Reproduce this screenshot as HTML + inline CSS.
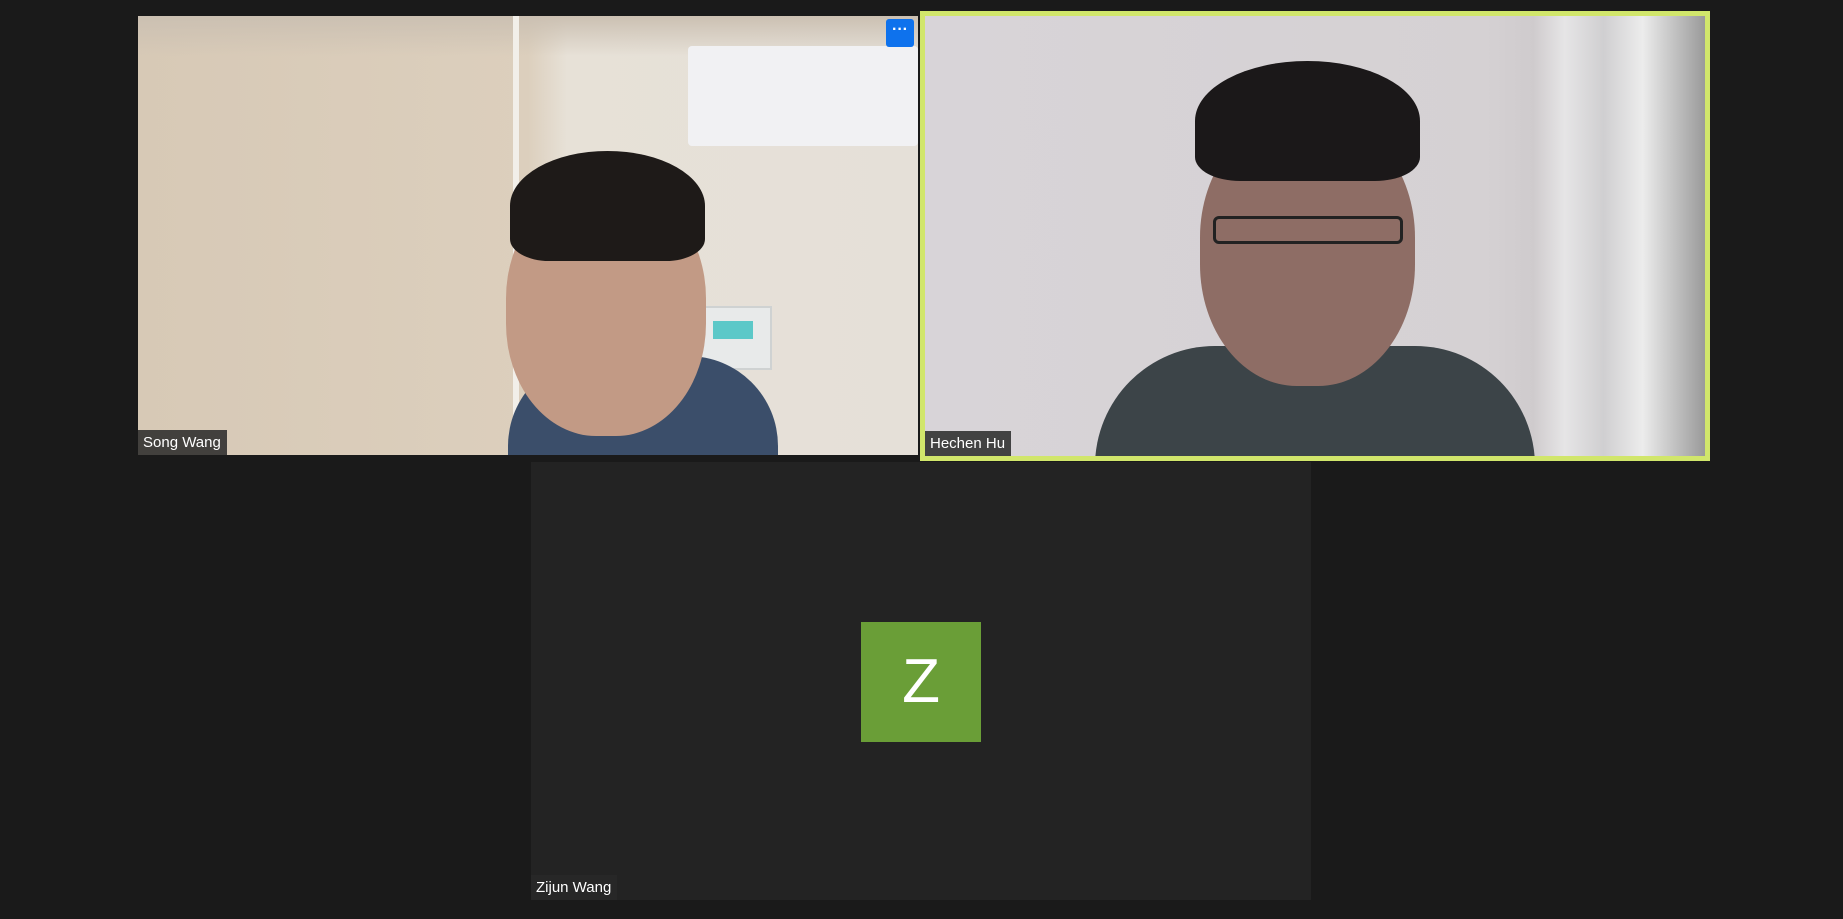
<!DOCTYPE html>
<html><head><meta charset="utf-8"><style>
html,body{margin:0;padding:0;width:1843px;height:919px;background:#1a1a1a;overflow:hidden;font-family:"Liberation Sans",sans-serif}
.t{position:absolute;overflow:hidden}
.lbl{position:absolute;left:0;bottom:0;background:rgba(40,40,40,.85);color:#fff;font-size:15px;padding:4px 6px 3px 5px;line-height:18px}
.b{position:absolute}
</style></head><body>
<div class="t" style="left:138px;top:16px;width:780px;height:439px;background:linear-gradient(90deg,#d7c9b6 0%,#dccfbd 50%,#e7e1d7 55%,#e5e0d8 100%)">
 <div class="b" style="left:0;top:0;width:780px;height:40px;background:linear-gradient(#cbc0b2,rgba(0,0,0,0))"></div>
 <div class="b" style="left:375px;top:0;width:6px;height:439px;background:#f2efe9"></div>
 <div class="b" style="left:550px;top:30px;width:230px;height:100px;background:#f1f1f3;border-radius:4px"></div>
 <div class="b" style="left:560px;top:290px;width:70px;height:60px;background:#e8eaea;border:2px solid #cfd2d2"></div>
 <div class="b" style="left:575px;top:305px;width:40px;height:18px;background:#5cc8c8"></div>
 <div class="b" style="left:370px;top:340px;width:270px;height:120px;background:#3b4e6a;border-radius:90px 90px 0 0"></div>
 <div class="b" style="left:368px;top:170px;width:200px;height:250px;background:#c29a85;border-radius:45%"></div>
 <div class="b" style="left:372px;top:135px;width:195px;height:110px;background:#1e1a18;border-radius:50% 50% 20% 20%"></div>
 <div class="lbl">Song Wang</div>
 <div class="b" style="left:748px;top:3px;width:28px;height:28px;background:#0e72ed;border-radius:3px;color:#fff;font-size:16px;text-align:center;line-height:22px;font-weight:bold">···</div>
</div>
<div class="t" style="left:920px;top:11px;width:780px;height:440px;border:5px solid #d1e66b;background:linear-gradient(90deg,#d8d4d8 0%,#d5d1d3 72%,#cfcbcd 78%,#e6e5e6 82%,#d0cfd1 87%,#ececec 92%,#9a9a9a 100%)">
 <div class="b" style="left:170px;top:330px;width:440px;height:120px;background:#3c4448;border-radius:120px 120px 0 0"></div>
 <div class="b" style="left:275px;top:100px;width:215px;height:270px;background:#8e6d65;border-radius:45%"></div>
 <div class="b" style="left:270px;top:45px;width:225px;height:120px;background:#1b1819;border-radius:50% 50% 20% 20%"></div>
 <div class="b" style="left:288px;top:200px;width:190px;height:28px;border:3px solid #222;border-radius:6px;box-sizing:border-box"></div>
 <div class="lbl">Hechen Hu</div>
</div>
<div class="t" style="left:531px;top:462px;width:780px;height:438px;background:#232323">
 <div class="b" style="left:330px;top:160px;width:120px;height:120px;background:#6a9e37;color:#fff;font-size:62px;text-align:center;line-height:120px">Z</div>
 <div class="lbl">Zijun Wang</div>
</div>
</body></html>
